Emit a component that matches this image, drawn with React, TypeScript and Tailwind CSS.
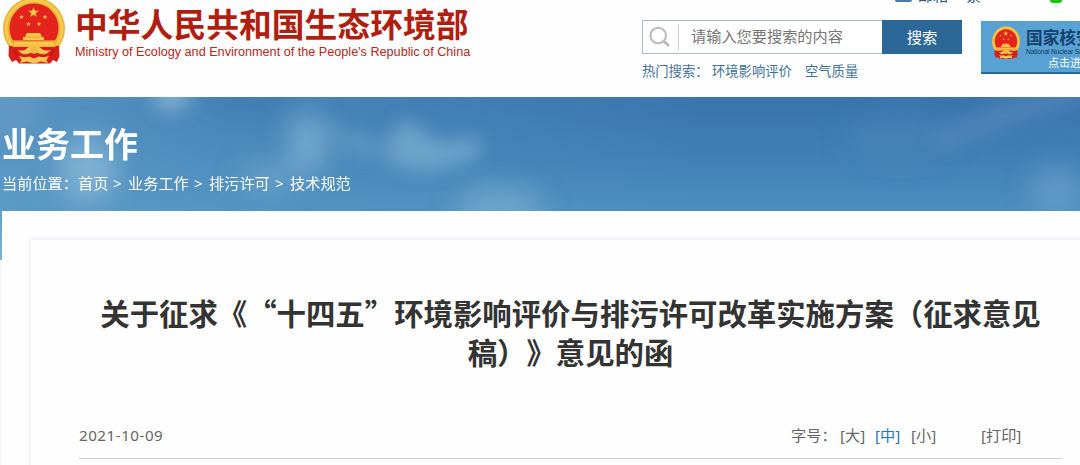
import React from "react";

const STAR =
  "M0,-10 L2.4,-3.2 9.5,-3.1 3.8,1.2 5.9,8.1 0,4 -5.9,8.1 -3.8,1.2 -9.5,-3.1 -2.4,-3.2Z";

function Emblem({ className }: { className: string }) {
  return (
    <svg className={className} viewBox="0 0 62 67" preserveAspectRatio="none" aria-hidden="true">
      <circle cx="31" cy="31.5" r="31" fill="#e9b238" />
      <circle cx="31" cy="31.5" r="28" fill="none" stroke="#f5cb50" strokeWidth="3" />
      <circle cx="31" cy="31" r="24.5" fill="#e4231c" />
      <g fill="#f8c84a">
        <path d={STAR} transform="translate(30.5 15.5) scale(.56)" />
        <path d={STAR} transform="translate(18.5 20) scale(.25)" />
        <path d={STAR} transform="translate(42 20) scale(.25)" />
        <path d={STAR} transform="translate(25.5 27) scale(.25)" />
        <path d={STAR} transform="translate(36 27) scale(.25)" />
        <path d="M24 36 H37 L38.5 38.5 V40 H41 V43 H20 V40 H22.500V38.500Z" />
        <path d="M10 43.500 H52 L50 48 H12Z" />
      </g>
      <path d="M23 40 H39 M12 44.500H50" stroke="#e9952f" strokeWidth=".8" />
      <path
        d="M6 48.500 Q15 51 20 49 H42 Q47 51 56 48.500 L56.500 59 L54 65 L50 63 L47 66.500 H16 L13 63 L9 65 L5.500 59Z"
        fill="#d91d1b"
      />
      <path d="M10 48 H52 V50 H10Z" fill="#f3bd43" />
      <path
        d="M15 53 Q21 55 25 50.500 Q31 46.500 37 50.500 Q41 55 48 53 Q43 59 36 56.500 Q31 53.500 26 56.500 Q19 59 15 53Z"
        fill="#f6c653"
      />
      <circle cx="31" cy="53" r="3.800" fill="#f0b944" />
      <path
        d="M16 59 Q21 61 26 59.500 L31 61.500 L36 59.500 Q41 61 46 59 L43.500 63 L45 66 L38 64.500 L31 66.500 L24 64.500 L17 66 L18.500 63Z"
        fill="#f6c653"
      />
      <path d="M11 53 L14 58 M51 53 L48 58" stroke="#a91814" strokeWidth="1.200" />
    </svg>
  );
}

function Sky() {
  return (
    <svg className="absolute inset-0 h-full w-full" viewBox="0 0 1080 114" preserveAspectRatio="none" aria-hidden="true">
      <defs>
        <linearGradient id="sky" x1="0" y1="0" x2="0" y2="1">
          <stop offset="0" stopColor="#3a75ad" />
          <stop offset=".5" stopColor="#407fb4" />
          <stop offset="1" stopColor="#4d8fbf" />
        </linearGradient>
        <linearGradient id="west" x1="0" y1="0" x2="1" y2="0">
          <stop offset="0" stopColor="#64a0ca" stopOpacity=".7" />
          <stop offset=".4" stopColor="#5b9ac7" stopOpacity=".4" />
          <stop offset="1" stopColor="#5b9ac7" stopOpacity="0" />
        </linearGradient>
        <filter id="soft" x="-80%" y="-150%" width="260%" height="400%">
          <feGaussianBlur stdDeviation="13" />
        </filter>
        <filter id="tight" x="-50%" y="-100%" width="200%" height="300%">
          <feGaussianBlur stdDeviation="9" />
        </filter>
      </defs>
      <rect width="1080" height="114" fill="url(#sky)" />
      <rect width="700" height="114" fill="url(#west)" />
      <g filter="url(#soft)">
        <ellipse cx="88" cy="72" rx="30" ry="34" fill="#8bb8d8" opacity=".75" />
        <ellipse cx="5" cy="12" rx="35" ry="28" fill="#6c9fc8" opacity=".5" />
        <ellipse cx="308" cy="46" rx="20" ry="30" fill="#8bb8d5" opacity=".65" />
        <ellipse cx="270" cy="80" rx="32" ry="14" fill="#7badd0" opacity=".55" />
        <ellipse cx="500" cy="110" rx="44" ry="20" fill="#78abcc" opacity=".75" />
        <ellipse cx="1056" cy="94" rx="26" ry="26" fill="#6d9fcb" opacity=".65" />
        <ellipse cx="250" cy="5" rx="50" ry="12" fill="#386fa9" opacity=".45" />
        <ellipse cx="900" cy="42" rx="55" ry="20" fill="#5089ba" opacity=".5" />
      </g>
      <g filter="url(#tight)">
        <ellipse cx="172" cy="0" rx="18" ry="13" fill="#8fb9d8" opacity=".8" />
        <path d="M386 44 L405 22 L428 38 L445 46 L475 40 L484 52 L470 64 L430 74 L395 70Z" fill="#83b2d2" opacity=".65" />
        <path d="M320 26 L370 38 L400 60 L350 60Z" fill="#79aacd" opacity=".4" />
        <path d="M930 38 L1000 8 L1080 -12 V4 L1010 28 L945 52Z" fill="#5e8fbd" opacity=".55" />
      </g>
    </svg>
  );
}

export default function App() {
  return (
    <div
      lang="zh-CN"
      className="flex h-[465px] w-[1080px] flex-col overflow-hidden whitespace-nowrap bg-white font-['Noto_Sans','Noto_Sans_CJK_SC',sans-serif] [text-spacing-trim:space-all]"
    >
      <header className="flex h-[97px] shrink-0 overflow-hidden bg-[#fefefe]">
        <div className="flex w-[642px] shrink-0 pl-[3px]">
          <Emblem className="-mt-[3px] h-[67px] w-[62px] shrink-0" />
          <div className="pl-[10px]">
            <div className="mt-[3px] h-[40px] font-['Noto_Sans_CJK_SC',sans-serif] text-[32.8px] font-bold leading-[40px] text-[#b11e10]">
              中华人民共和国生态环境部
            </div>
            <div className="h-[18px] font-['Liberation_Sans',sans-serif] text-[12.65px] leading-[18px] text-[#b5281b]">
              Ministry of Ecology and Environment of the People's Republic of China
            </div>
          </div>
        </div>

        <div className="flex w-[438px] shrink-0 flex-col">
          <div className="flex h-[20px] shrink-0 items-start pl-[253px]">
            <div className="h-[2px] w-[17px] rounded-b-sm bg-[#4a7aa5]" />
            <div className="-mt-[14px] ml-[6px] h-[18px] text-[15px] leading-[18px] text-[#28557f]">邮箱</div>
            <div className="-mt-[14px] ml-[18px] h-[18px] text-[15px] leading-[18px] text-[#28557f]">繁</div>
            <div className="ml-[69px] h-[3px] w-[12px] rounded-b-full bg-[#0fc80f]" />
          </div>
          <div className="flex">
            <div>
              <div className="flex h-[34px] w-[320px]">
                <div className="flex h-full w-[240px] items-center border border-r-0 border-[#aabfd4] bg-white">
                  <svg className="ml-[6px] h-[22px] w-[22px]" viewBox="0 0 22 22" fill="none" stroke="#b9bbb9" aria-hidden="true">
                    <circle cx="9.2" cy="9.5" r="7.8" strokeWidth="2" />
                    <path d="M15 15.3 L20 20" strokeWidth="2.7" />
                  </svg>
                  <div className="ml-[7px] h-[26px] w-px bg-[#cccfcd]" />
                  <span className="-mt-[2px] ml-[12px] text-[15.2px] leading-[30px] text-[#777]">请输入您要搜索的内容</span>
                </div>
                <button className="h-full w-[80px] bg-[#2b6898] text-[15.3px] leading-[32px] text-white">
                  搜索
                </button>
              </div>
              <div className="mt-[7px] flex h-[20px] text-[13.3px] leading-[20px] text-[#41719a]">
                <span className="w-[70px]">热门搜索：</span>
                <span className="w-[93px]">环境影响评价</span>
                <span>空气质量</span>
              </div>
            </div>
            <div className="ml-[19px] mt-px flex h-[53px] w-[99px] shrink-0 overflow-hidden border-b-2 border-[#2b6898] bg-[#57a2d3] pl-[11px]">
              <Emblem className="mt-[5px] h-[33px] w-[28px] shrink-0" />
              <div className="ml-[6px] pt-[6px]">
                <div className="h-[20px] font-['Noto_Sans_CJK_SC',sans-serif] text-[16.7px] font-bold leading-[20px] text-[#15416f]">国家核安全局</div>
                <div className="h-[9px] font-['Liberation_Sans',sans-serif] text-[6.7px] leading-[9px] tracking-[-0.15px] text-[#143a61]">
                  National Nuclear Safety Administration
                </div>
                <div className="h-[14px] pl-[22px] text-[11px] leading-[14px] text-white">点击进入</div>
              </div>
            </div>
          </div>
        </div>
      </header>

      <section className="relative h-[114px] shrink-0 overflow-hidden">
        <Sky />
        <div className="relative pl-[2px] text-white">
          <h1 className="mt-[25px] h-[44px] text-[34px] font-bold leading-[44px]">业务工作</h1>
          <nav className="mt-[6px] flex h-[22px] text-[15.2px] leading-[22px]">
            <span className="w-[76px]">当前位置：</span>
            <span className="w-[35px]">首页</span>
            <span className="w-[15px]">&gt;</span>
            <span className="w-[66px]">业务工作</span>
            <span className="w-[15px]">&gt;</span>
            <span className="w-[66px]">排污许可</span>
            <span className="w-[15px]">&gt;</span>
            <span>技术规范</span>
          </nav>
        </div>
      </section>

      <main className="flex min-h-0 flex-1 bg-[#f8f8fa]">
        <div className="h-[49px] w-[2px] shrink-0 bg-gradient-to-b from-[#5f9fca] to-[#7db3d6]" />
        <div className="flex-1 overflow-hidden bg-[#fefefe] pl-[29px] pt-[29px]">
          <article className="h-[260px] w-[1090px] bg-[#fefefe] pl-[48px] pt-[53px] shadow-[0_0_5px_1px_#ebe8ef]">
            <h2 className="w-[983px] text-center font-['Noto_Sans_CJK_SC',sans-serif] text-[29.4px] font-bold leading-[39px] text-[#333]">
              关于征求《“十四五”环境影响评价与排污许可改革实施方案（征求意见
              <br />
              稿）》意见的函
            </h2>
            <div className="mt-[53px] flex h-[35px] w-[983px] border-b border-[#cfd2d4] text-[15.2px] leading-[22px] text-[#666]">
              <span className="w-[712px] tracking-[0.5px]">2021-10-09</span>
              <span className="w-[49px]">字号：</span>
              <span className="w-[35px]">[大]</span>
              <span className="w-[36px] text-[#2675b5]">[中]</span>
              <span className="w-[70px]">[小]</span>
              <span>[打印]</span>
            </div>
          </article>
        </div>
      </main>
    </div>
  );
}
